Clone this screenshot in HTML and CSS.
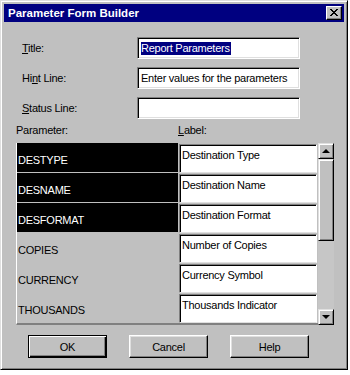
FILE: index.html
```html
<!DOCTYPE html>
<html lang="en">

<head>
    <meta charset="UTF-8">
    <title>Parameter Form Builder</title>
    <link rel="stylesheet" href="styles.css">
</head>

<body>
    <div class="window">
        <!-- Title bar -->
        <div class="titlebar">
            <span class="title">Parameter Form Builder</span>
            <button class="close" type="button">
                <svg width="8" height="7" viewBox="0 0 8 7" shape-rendering="crispEdges">
                    <path d="M0 0h2v1h-2zM6 0h2v1h-2zM1 1h2v1h-2zM5 1h2v1h-2zM2 2h4v1h-4zM3 3h2v1h-2zM2 4h4v1h-4zM1 5h2v1h-2zM5 5h2v1h-2zM0 6h2v1h-2zM6 6h2v1h-2z" fill="#000"/>
                </svg>
            </button>
        </div>

        <div class="content">
            <!-- Top fields -->
            <div class="fields">
                <label class="field-label"><u>T</u>itle:</label>
                <div class="field"><span class="selected-text">Report Parameters</span></div>

                <label class="field-label">Hi<u>n</u>t Line:</label>
                <div class="field">Enter values for the parameters</div>

                <label class="field-label"><u>S</u>tatus Line:</label>
                <div class="field"></div>
            </div>

            <!-- Parameter list -->
            <div class="list-head">
                <span class="head-param">Parameter:</span>
                <span class="head-label"><u>L</u>abel:</span>
            </div>

            <div class="list">
                <div class="rows">
                    <div class="row active">
                        <div class="param">DESTYPE</div>
                        <div class="label-cell"><div class="label-box">Destination Type</div></div>
                    </div>
                    <div class="row active">
                        <div class="param">DESNAME</div>
                        <div class="label-cell"><div class="label-box">Destination Name</div></div>
                    </div>
                    <div class="row active">
                        <div class="param">DESFORMAT</div>
                        <div class="label-cell"><div class="label-box">Destination Format</div></div>
                    </div>
                    <div class="row">
                        <div class="param">COPIES</div>
                        <div class="label-cell"><div class="label-box">Number of Copies</div></div>
                    </div>
                    <div class="row">
                        <div class="param">CURRENCY</div>
                        <div class="label-cell"><div class="label-box">Currency Symbol</div></div>
                    </div>
                    <div class="row">
                        <div class="param">THOUSANDS</div>
                        <div class="label-cell"><div class="label-box">Thousands Indicator</div></div>
                    </div>
                </div>

                <div class="scrollbar">
                    <div class="scroll-btn"><span class="arrow-up"></span></div>
                    <div class="thumb"></div>
                    <div class="track"></div>
                    <div class="scroll-btn"><span class="arrow-down"></span></div>
                </div>
            </div>

            <!-- Buttons -->
            <div class="buttons">
                <button class="btn default" type="button">OK</button>
                <button class="btn" type="button">Cancel</button>
                <button class="btn" type="button">Help</button>
            </div>
        </div>
    </div>
</body>

</html>
```

FILE: styles.css
```css
/* Base */
* {
    margin: 0;
    padding: 0;
    box-sizing: border-box;
}

body {
    background-color: #ffffff;
    font-family: 'Liberation Sans', Arial, sans-serif;
    font-size: 11px;
    letter-spacing: -0.25px;
    color: #000;
}

/* Window frame */
.window {
    width: 348px;
    height: 370px;
    background-color: #c0c0c0;
    border-top: 1px solid #dfdfdf;
    border-left: 1px solid #dfdfdf;
    border-right: 1px solid #000;
    border-bottom: 1px solid #000;
    box-shadow: inset 1px 1px #ffffff, inset -1px -1px #808080;
    padding: 3px;
}

.titlebar {
    height: 18px;
    background-color: #000080;
    display: flex;
    align-items: center;
    justify-content: space-between;
    padding: 0 2px 0 4px;
}

.title {
    color: #ffffff;
    font-weight: bold;
    font-size: 11.5px;
    letter-spacing: 0;
    line-height: 14px;
}

.close {
    width: 16px;
    height: 14px;
    background-color: #c0c0c0;
    border-top: 1px solid #fff;
    border-left: 1px solid #fff;
    border-right: 1px solid #000;
    border-bottom: 1px solid #000;
    box-shadow: inset -1px -1px #808080;
    display: flex;
    align-items: center;
    justify-content: center;
    padding-bottom: 1px;
}

.close svg {
    display: block;
}

/* Content */
.content {
    padding: 0 12px;
}

.fields {
    display: grid;
    grid-template-columns: 115px 163px;
    row-gap: 8px;
    margin-top: 15px;
    padding-left: 6px;
    align-items: center;
}

.field-label {
    line-height: 13px;
}

.field {
    height: 22px;
    background-color: #fff;
    border-top: 1px solid #808080;
    border-left: 1px solid #808080;
    border-right: 1px solid #fff;
    border-bottom: 1px solid #fff;
    box-shadow: inset 1px 1px #000, inset -1px -1px #dfdfdf;
    padding: 4px 3px 0;
    line-height: 13px;
    white-space: nowrap;
    overflow: hidden;
}

.selected-text {
    background-color: #000080;
    color: #fff;
    padding: 0 1px 1px 0;
}

/* Parameter list */
.list-head {
    display: flex;
    margin-top: 5px;
    line-height: 13px;
}

.head-param {
    width: 162px;
}

.list {
    display: flex;
    margin-top: 6px;
    width: 318px;
    height: 182px;
}

.rows {
    width: 302px;
    border-left: 1px solid #fff;
    border-bottom: 2px solid #808080;
}

.row {
    display: flex;
    height: 30px;
}

.param {
    width: 161px;
    padding: 11px 0 0 1px;
    line-height: 13px;
    border-bottom: 1px solid #c0c0c0;
}

.row.active .param {
    background-color: #000;
    color: #fff;
}

.label-cell {
    flex: 1;
    padding: 1px 1px 0 1px;
}

.label-box {
    height: 29px;
    background-color: #fff;
    border-top: 1px solid #808080;
    border-left: 1px solid #808080;
    border-right: 1px solid #fff;
    border-bottom: 1px solid #dfdfdf;
    box-shadow: inset 1px 1px #000;
    padding: 4px 2px 0;
    line-height: 13px;
    white-space: nowrap;
}

/* Scrollbar */
.scrollbar {
    width: 16px;
    display: flex;
    flex-direction: column;
}

.scroll-btn,
.thumb {
    background-color: #c0c0c0;
    border-top: 1px solid #dfdfdf;
    border-left: 1px solid #dfdfdf;
    border-right: 1px solid #000;
    border-bottom: 1px solid #000;
    box-shadow: inset 1px 1px #fff, inset -1px -1px #808080;
}

.scroll-btn {
    height: 16px;
    display: flex;
    align-items: center;
    justify-content: center;
}

.thumb {
    height: 82px;
}

.track {
    flex: 1;
    background-color: #c6c6c6;
}

.arrow-up {
    width: 0;
    height: 0;
    border-left: 4px solid transparent;
    border-right: 4px solid transparent;
    border-bottom: 4px solid #000;
}

.arrow-down {
    width: 0;
    height: 0;
    border-left: 4px solid transparent;
    border-right: 4px solid transparent;
    border-top: 4px solid #000;
}

/* Buttons */
.buttons {
    display: flex;
    gap: 22px;
    margin-top: 10px;
    padding-left: 12px;
}

.btn {
    width: 79px;
    height: 23px;
    font-family: 'Liberation Sans', Arial, sans-serif;
    font-size: 11px;
    letter-spacing: -0.25px;
    background-color: #c0c0c0;
    border-top: 1px solid #fff;
    border-left: 1px solid #fff;
    border-right: 1px solid #000;
    border-bottom: 1px solid #000;
    box-shadow: inset -1px -1px #808080, inset 1px 1px #dfdfdf;
}

.btn.default {
    border: 1px solid #000;
    box-shadow: inset 1px 1px #fff, inset -1px -1px #000, inset -2px -2px #808080;
}
```
